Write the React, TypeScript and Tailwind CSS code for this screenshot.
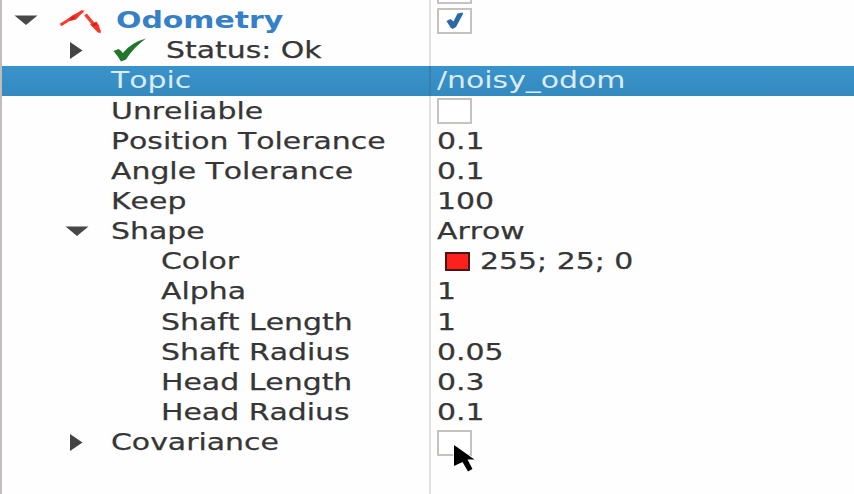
import type { ReactNode } from "react";

type Row = {
  label: string;
  indent: string;
  bold?: boolean;
  expander?: { kind: "open" | "closed"; slot: string };
  icon?: ReactNode;
  value?: ReactNode;
  selected?: boolean;
};

function Text({ children, className = "" }: { children: ReactNode; className?: string }) {
  return (
    <span
      className={`-mt-px block origin-left scale-x-[1.272] whitespace-pre leading-[30px] [font-kerning:none] ${className}`}
    >
      {children}
    </span>
  );
}

function Expander({ kind }: { kind: "open" | "closed" }) {
  return kind === "open" ? (
    <svg width="24" height="11" viewBox="0 0 24 11" className="block">
      <path d="M0.5 0.5H23.5L12 10Z" fill="#484848" />
    </svg>
  ) : (
    <svg width="24" height="18" viewBox="0 0 24 18" className="block">
      <path d="M6 0V17L18.5 8.5Z" fill="#444444" />
    </svg>
  );
}

function ArrowsIcon() {
  return (
    <svg width="44" height="26" viewBox="0 0 44 26" className="block">
      <path d="M1.5 17L24 3" stroke="#fb3b2c" strokeWidth="2.8" />
      <path d="M8.5 11.5L14 7L26 2L17 11.5L11.5 13Z" fill="#fb3426" />
      <path d="M26.5 6.5L41 24" stroke="#fb3b2c" strokeWidth="3.4" />
      <path d="M31 16.5L37.5 13.5L40 17.5L41.8 25.5L38 23.5Z" fill="#fb3426" />
      <path d="M11.5 11L16 8.8M33.5 17L37.5 16" stroke="#c02a1f" strokeWidth="2.4" />
    </svg>
  );
}

function OkIcon() {
  return (
    <svg width="34" height="25" viewBox="0 0 34 25" className="block">
      <path
        d="M0.5 13L5.5 11Q8.5 12.5 9.8 15Q19 4 33 0.5Q21 9 13 21.5L8 23.5Q4.5 17.5 0.5 13Z"
        fill="#24752c"
      />
    </svg>
  );
}

function CheckBox({ checked = false }: { checked?: boolean }) {
  return (
    <span className="flex h-[26px] w-[35px] items-center justify-center border-2 border-[#c7c2bf] bg-white">
      {checked && (
        <svg width="18" height="18" viewBox="0 0 18 18" className="block">
          <path d="M0.5 9L4.5 7L7.5 9.5L11.5 1.5L16.5 0.5L17 2L10 15L6.5 17L4.5 15.5Z" fill="#2a69a8" />
        </svg>
      )}
    </span>
  );
}

const rows: Row[] = [
  {
    label: "Odometry",
    bold: true,
    indent: "w-[114px]",
    expander: { kind: "open", slot: "pl-[12px]" },
    icon: <span className="ml-[21px]"><ArrowsIcon /></span>,
    value: <CheckBox checked />,
  },
  {
    label: "Status: Ok",
    indent: "w-[164px]",
    expander: { kind: "closed", slot: "pl-[62px]" },
    icon: <span className="ml-[25px]"><OkIcon /></span>,
  },
  { label: "Topic", indent: "w-[108.5px]", selected: true, value: <Text>/noisy_odom</Text> },
  { label: "Unreliable", indent: "w-[108.5px]", value: <CheckBox /> },
  { label: "Position Tolerance", indent: "w-[108.5px]", value: <Text>0.1</Text> },
  { label: "Angle Tolerance", indent: "w-[108.5px]", value: <Text>0.1</Text> },
  { label: "Keep", indent: "w-[108.5px]", value: <Text>100</Text> },
  {
    label: "Shape",
    indent: "w-[108.5px]",
    expander: { kind: "open", slot: "pl-[63px]" },
    value: <Text>Arrow</Text>,
  },
  {
    label: "Color",
    indent: "w-[159px]",
    value: (
      <>
        <span className="ml-[8px] mr-[10px] block h-[19px] w-[25px] shrink-0 border-2 border-[#4a1513] bg-[#fd201c]" />
        <Text>255; 25; 0</Text>
      </>
    ),
  },
  { label: "Alpha", indent: "w-[159px]", value: <Text>1</Text> },
  { label: "Shaft Length", indent: "w-[159px]", value: <Text>1</Text> },
  { label: "Shaft Radius", indent: "w-[159px]", value: <Text>0.05</Text> },
  { label: "Head Length", indent: "w-[159px]", value: <Text>0.3</Text> },
  { label: "Head Radius", indent: "w-[159px]", value: <Text>0.1</Text> },
  {
    label: "Covariance",
    indent: "w-[108.5px]",
    expander: { kind: "closed", slot: "pl-[62px]" },
    value: <CheckBox />,
  },
];

function PropertyRow({ row }: { row: Row }) {
  return (
    <div
      className={`flex h-[30.15px] shrink-0 ${
        row.selected
          ? "bg-linear-to-b from-[#3993cb] to-[#348abf] text-[#dcebf5]"
          : "text-[#363636] [-webkit-text-stroke:0.25px]"
      }`}
    >
      <div
        className={`flex w-[429px] shrink-0 items-center border-r-2 ${
          row.selected ? "border-[#3580b0]" : "border-[#e2e2e2]"
        }`}
      >
        <div className={`flex shrink-0 items-center ${row.indent}`}>
          {row.expander && (
            <span className={row.expander.slot}>
              <Expander kind={row.expander.kind} />
            </span>
          )}
          {row.icon}
        </div>
        <Text className={row.bold ? "font-bold text-[#3580c6] [-webkit-text-stroke:0px]" : ""}>{row.label}</Text>
      </div>
      <div className="flex items-center pl-[6px]">{row.value}</div>
    </div>
  );
}

export default function App() {
  return (
    <main className="relative flex h-[494px] w-[854px] flex-col overflow-hidden border-l-2 border-[#c2bbb8] bg-[#fefefe] font-['DejaVu_Sans',sans-serif] text-[23.5px]">
      <div className="flex h-[5.6px] shrink-0">
        <div className="w-[429px] border-r-2 border-[#e2e2e2]" />
        <div className="ml-[6px] h-[4px] w-[35px] border-2 border-t-0 border-[#c7c2bf]" />
      </div>
      {rows.map((row) => (
        <PropertyRow key={row.label} row={row} />
      ))}
      <div className="w-[429px] flex-1 border-r-2 border-[#e2e2e2]" />
      <svg width="24" height="30" viewBox="0 0 24 30" className="absolute left-[451px] top-[444px]">
        <path
          d="M1 1L21.5 15.5H14.5L19.5 25L15 27.5L9.5 18L1 22Z"
          fill="#000"
          stroke="#fff"
          strokeWidth="1.5"
          paintOrder="stroke"
        />
      </svg>
    </main>
  );
}
